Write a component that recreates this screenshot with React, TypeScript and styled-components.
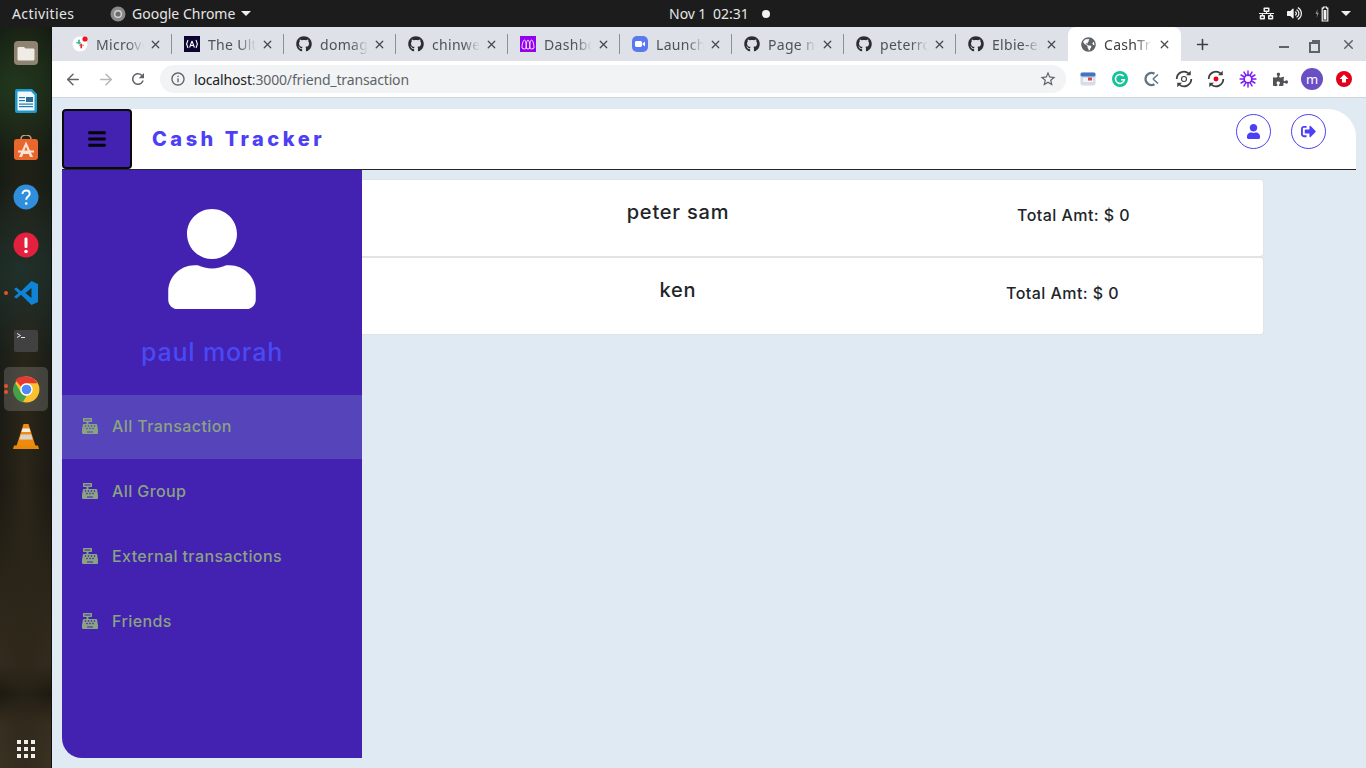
import React from 'react';
import styled, { createGlobalStyle } from 'styled-components';
import { FaBars, FaUser, FaSignOutAlt, FaCashRegister, FaGithub, FaGlobeAmericas, FaPuzzlePiece, FaVolumeUp, FaNetworkWired } from 'react-icons/fa';
import { MdRefresh, MdInfoOutline, MdStarBorder } from 'react-icons/md';
import { ArrowLeft, ArrowRight, X, Plus } from 'lucide-react';

const GlobalStyle = createGlobalStyle`
  html, body {
    margin: 0;
    padding: 0;
    width: 1366px;
    height: 768px;
    overflow: hidden;
    background: #1c1c1c;
  }
  * { box-sizing: border-box; }
`;

const Screen = styled.div`
  width: 1366px;
  height: 768px;
  display: flex;
  flex-direction: column;
  font-family: 'Noto Sans', sans-serif;
`;

/* gnome top bar */
const TopBar = styled.div`
  height: 27px;
  flex: none;
  background: #1c1c1c;
  color: #e6e6e6;
  display: flex;
  align-items: center;
  font-size: 14px;
`;

const Activities = styled.span`
  margin-left: 12px;
  width: 98px;
  letter-spacing: 0.4px;
`;

const AppMenu = styled.div`
  display: flex;
  align-items: center;
  width: 559px;
  gap: 6px;
`;

const Caret = styled.span<{ $tight?: boolean }>`
  width: 0;
  height: 0;
  margin-left: ${p => (p.$tight ? -3 : 0)}px;
  border-left: 5px solid transparent;
  border-right: 5px solid transparent;
  border-top: 5px solid #eee;
`;

const Clock = styled.span`
  width: 93px;
  word-spacing: -0.3px;
  white-space: pre;
`;

const Dot = styled.span`
  width: 8px;
  height: 8px;
  border-radius: 50%;
  background: #f2f2f2;
`;

const Tray = styled.div`
  margin-left: auto;
  padding-right: 15px;
  display: flex;
  align-items: center;
  gap: 13px;
`;

const Body = styled.div`
  flex: 1;
  display: flex;
  min-height: 0;
`;

/* launcher */
const Dock = styled.div`
  width: 52px;
  flex: none;
  padding: 2px 0 0 4px;
  display: flex;
  flex-direction: column;
  border-right: 1px solid #111;
  background:
    radial-gradient(circle at 30% 8%, #22381d 0, transparent 70px),
    radial-gradient(circle at 40% 33%, #20302a 0, transparent 90px),
    radial-gradient(ellipse at 50% 60%, #2c2619 0, transparent 40px),
    linear-gradient(180deg, #0f1a10 0%, #101817 45%, #14130f 62%, #2b2519 76%, #352d20 86%, #17140e 90%, #3a3122 94%, #3f3626 100%);
`;

const DockItem = styled.div<{ $active?: boolean }>`
  position: relative;
  width: 44px;
  height: 48px;
  display: flex;
  align-items: center;
  justify-content: center;
  ${p => p.$active && `
    height: 44px;
    margin: 2px 0;
    border-radius: 5px;
    background: rgba(255, 255, 255, 0.16);
  `}
`;

const DockGrid = styled.div`
  margin-top: auto;
  margin-bottom: 10px;
  margin-left: 13px;
  display: grid;
  grid-template-columns: repeat(3, 4px);
  gap: 3px;
  span {
    width: 4px;
    height: 4px;
    background: #eee;
  }
`;

const RunDot = styled.i<{ $top: number }>`
  position: absolute;
  left: 0;
  top: ${p => p.$top}px;
  width: 4px;
  height: 4px;
  border-radius: 50%;
  background: #e95420;
`;

/* chrome */
const Browser = styled.div`
  flex: 1;
  display: flex;
  flex-direction: column;
  min-width: 0;
`;

const TabStrip = styled.div`
  height: 34px;
  flex: none;
  background: #dee1e8;
  padding-left: 8px;
  display: flex;
  align-items: flex-end;
  color: #5c5f66;
`;

const Tab = styled.div<{ $active?: boolean; $last?: boolean }>`
  width: ${p => (p.$active ? 113 : 112)}px;
  height: 34px;
  padding: 0 10px 0 12px;
  display: flex;
  align-items: center;
  position: relative;
  font-size: 14px;
  color: ${p => (p.$active ? '#3c4043' : '#4f5257')};
  background: ${p => (p.$active ? '#ffffff' : 'transparent')};
  border-radius: ${p => (p.$active ? '8px 8px 0 0' : '0')};
  &::after {
    content: '';
    display: ${p => (p.$active || p.$last ? 'none' : 'block')};
    position: absolute;
    right: 0;
    top: 7px;
    bottom: 7px;
    width: 1px;
    background: #8e9196;
  }
`;

const TabIcon = styled.span`
  width: 16px;
  height: 16px;
  flex: none;
  display: flex;
  align-items: center;
  justify-content: center;
  margin-right: 8px;
`;

const TabTitle = styled.span`
  width: 50px;
  flex: none;
  overflow: hidden;
  white-space: nowrap;
  letter-spacing: 0.3px;
  -webkit-mask-image: linear-gradient(90deg, #000 62%, transparent 96%);
  mask-image: linear-gradient(90deg, #000 62%, transparent 96%);
`;

const TabClose = styled.span`
  margin-left: auto;
  display: flex;
  color: #45484d;
`;

const NewTab = styled.span`
  margin-left: 13px;
  height: 34px;
  display: flex;
  align-items: center;
  color: #3c4043;
`;

const WindowButtons = styled.div`
  margin-left: auto;
  height: 34px;
  padding-right: 10px;
  display: flex;
  align-items: center;
  color: #5f6368;
`;

const MinimizeIcon = styled.span`
  width: 10px;
  height: 2px;
  margin: 6px 23px 0 0;
  background: #5f6368;
`;

const RestoreIcon = styled.span`
  width: 8px;
  height: 8px;
  margin: 0 21px 0 0;
  position: relative;
  border: 2px solid #5f6368;
  &::before {
    content: '';
    position: absolute;
    left: -5px;
    top: 0;
    width: 7px;
    height: 7px;
    border: 2px solid #5f6368;
    background: #dee1e8;
  }
`;

const Toolbar = styled.div`
  height: 37px;
  flex: none;
  background: #ffffff;
  border-bottom: 1px solid #d2d6dc;
  padding-left: 12px;
  display: flex;
  align-items: center;
`;

const NavButton = styled.span<{ $dim?: boolean }>`
  width: 18px;
  margin-right: 14.5px;
  display: flex;
  justify-content: center;
  color: ${p => (p.$dim ? '#b4b6b9' : '#5f6368')};
`;

const AddressBar = styled.div`
  width: 906px;
  height: 28px;
  margin-left: -1.5px;
  padding: 0 9px 0 10px;
  border-radius: 14px;
  background: #f1f3f4;
  display: flex;
  align-items: center;
  font-size: 14px;
  color: #5f6368;
`;

const Host = styled.span`
  color: #202124;
`;

const UrlText = styled.span`
  margin-left: 8px;
  letter-spacing: -0.15px;
`;

const StarSlot = styled.span`
  margin-left: auto;
  display: flex;
  color: #5f6368;
`;

const Extensions = styled.div`
  margin-left: 6px;
  display: flex;
  align-items: center;
`;

const Extension = styled.span`
  width: 32px;
  height: 24px;
  display: flex;
  align-items: center;
  justify-content: center;
`;

const ProfileBadge = styled.span`
  width: 22px;
  height: 22px;
  border-radius: 50%;
  background: #6a4fc4;
  color: #fff;
  font-size: 13px;
  display: flex;
  align-items: center;
  justify-content: center;
`;

/* the app */
const Page = styled.div`
  flex: 1;
  min-height: 0;
  background: #e0eaf3;
  padding: 11px 10px 10px;
  display: flex;
  flex-direction: column;
  font-family: Inter, 'Open Sans', sans-serif;
`;

const Header = styled.header`
  height: 61px;
  flex: none;
  background: #ffffff;
  border-top-right-radius: 28px;
  border-bottom: 1px solid #23262b;
  display: flex;
  align-items: flex-start;
`;

const MenuButton = styled.button`
  width: 70px;
  height: 60px;
  padding: 0;
  border: 2px solid #0a0a0a;
  border-radius: 4px;
  background: #4321b1;
  color: #050505;
  display: flex;
  align-items: center;
  justify-content: center;
`;

const Brand = styled.h1`
  margin: 18px 0 0 20px;
  font-size: 20px;
  line-height: 24px;
  font-weight: 800;
  letter-spacing: 3.5px;
  color: #4d3ff5;
`;

const HeaderActions = styled.div`
  margin: 5px 30px 0 auto;
  display: flex;
  gap: 20px;
`;

const CircleButton = styled.span`
  width: 35px;
  height: 35px;
  border-radius: 50%;
  border: 1px solid #4d3ff5;
  color: #4d3ff5;
  display: flex;
  align-items: center;
  justify-content: center;
`;

const Workspace = styled.div`
  flex: 1;
  min-height: 0;
  display: flex;
`;

const Sidebar = styled.aside`
  width: 300px;
  flex: none;
  background: #4321b1;
  border-bottom-left-radius: 20px;
  padding-top: 39px;
  display: flex;
  flex-direction: column;
`;

const Avatar = styled.div`
  height: 100px;
  display: flex;
  justify-content: center;
  color: #ffffff;
`;

const ProfileName = styled.div`
  margin-top: 25px;
  height: 36px;
  font-size: 25px;
  line-height: 36px;
  font-weight: 500;
  letter-spacing: 0.8px;
  text-align: center;
  color: #4a4af4;
`;

const Nav = styled.nav`
  margin-top: 25px;
  display: flex;
  flex-direction: column;
`;

const NavItem = styled.a<{ $active?: boolean }>`
  height: ${p => (p.$active ? 64 : 65)}px;
  padding: 0 0 2px 20px;
  display: flex;
  align-items: center;
  gap: 14px;
  font-size: 16px;
  font-weight: 500;
  letter-spacing: 0.4px;
  color: #8aa381;
  background: ${p => (p.$active ? '#5644bb' : 'transparent')};
`;

const Content = styled.main`
  width: 902px;
  padding-top: 9px;
  display: flex;
  flex-direction: column;
`;

const FriendCard = styled.div`
  height: 78px;
  flex: none;
  background: #ffffff;
  border: 1px solid #e1e3e5;
  border-left: none;
  border-radius: 0 4px 4px 0;
  display: flex;
  align-items: flex-start;
  color: #212529;
`;

const FriendName = styled.div`
  width: 632px;
  flex: none;
  margin-top: 19px;
  font-size: 20px;
  line-height: 26px;
  font-weight: 500;
  letter-spacing: 0.8px;
  text-align: center;
`;

const FriendTotal = styled.div<{ $indent: number }>`
  margin: 24px 0 0 ${p => p.$indent}px;
  font-size: 16px;
  line-height: 22px;
  font-weight: 500;
  letter-spacing: 0.45px;
`;

const GithubTab = () => <FaGithub size={16} color="#2b2d31" />;

const SlackMark = () => (
  <svg width="16" height="16" viewBox="0 0 16 16">
    <circle cx="8" cy="8" r="7.5" fill="#fff" />
    <rect x="4" y="6" width="5" height="1.6" rx=".8" fill="#36c5f0" />
    <rect x="6.2" y="3.5" width="1.6" height="5" rx=".8" fill="#2eb67d" />
    <rect x="7" y="8.6" width="5" height="1.6" rx=".8" fill="#ecb22e" />
    <rect x="8.4" y="7.5" width="1.6" height="5" rx=".8" fill="#e01e5a" />
    <circle cx="13" cy="3" r="2.6" fill="#f0121e" />
  </svg>
);

const AngularMark = () => (
  <svg width="16" height="16" viewBox="0 0 16 16">
    <rect width="16" height="16" fill="#0c0530" />
    <path d="M8 5 5.600 11.500M8 5l2.400 6.500M6.500 9.500h3M4 4 2.600 8 4 12M12 4l1.400 4L12 12" fill="none" stroke="#fff" strokeWidth="1.100" />
  </svg>
);

const DashboardMark = () => (
  <svg width="16" height="16" viewBox="0 0 16 16">
    <rect width="16" height="16" fill="#9400f0" />
    <path d="M2 12c0-3 1-8 2.400-8s2 5 2 8c-1 1.200-3.400 1.200-4.400 0zM6 12c0-3 .8-8 2-8s2 5 2 8c-1 1.200-3 1.200-4 0zM9.600 12c0-3 .6-8 2-8s2.400 5 2.400 8c-1 1.200-3.400 1.200-4.400 0z" fill="none" stroke="#fff" strokeWidth=".9" />
  </svg>
);

const ZoomMark = () => (
  <svg width="16" height="16" viewBox="0 0 16 16">
    <rect width="16" height="16" rx="5" fill="#5a78f0" />
    <rect x="3" y="5" width="7" height="6" rx="1.400" fill="#fff" />
    <path d="M10.500 7.400 13 5.500v5l-2.500-1.900z" fill="#fff" />
  </svg>
);

const SmallChrome = () => (
  <svg width="16" height="16" viewBox="0 0 16 16">
    <circle cx="8" cy="8" r="7.500" fill="#8a8a8a" />
    <circle cx="8" cy="8" r="4" fill="#d5d5d5" />
    <circle cx="8" cy="8" r="2.600" fill="#6d6d6d" />
  </svg>
);

const NetworkIcon = () => <FaNetworkWired size={15} color="#f2f2f2" />;

const BatteryIcon = () => (
  <svg width="16" height="16" viewBox="0 0 16 16">
    <path d="M2.500 3 .5 8h1.600l-.6 4 2.300-5.200H2.300z" fill="#8e8e8e" />
    <path d="M8.500 1h3v1.200h1.300V15H7.200V2.200h1.300z" fill="none" stroke="#f2f2f2" strokeWidth="1.200" />
    <rect x="8.600" y="4" width="2.800" height="9.600" fill="#f2f2f2" />
  </svg>
);

const FilesIcon = () => (
  <svg width="26" height="26" viewBox="0 0 26 26">
    <rect x="1" y="1" width="24" height="24" rx="4" fill="#8f8471" />
    <path d="M4.500 8.500c0-1 .8-1.500 1.500-1.500h5l1.500 1.500H20c1 0 1.500.7 1.500 1.500v9c0 1-.7 1.500-1.500 1.500H6c-1 0-1.500-.7-1.500-1.500z" fill="#efece6" />
  </svg>
);

const WriterIcon = () => (
  <svg width="24" height="26" viewBox="0 0 24 26">
    <path d="M3 1h15l5 5v17a2 2 0 0 1-2 2H3a2 2 0 0 1-2-2V3a2 2 0 0 1 2-2z" fill="#1c99cf" />
    <path d="M3.500 3.500h13.500l3.500 3.500v15.500h-17z" fill="#f4f8fb" />
    <rect x="5" y="9" width="6" height="1.200" fill="#1a7fb0" />
    <rect x="5" y="12" width="6" height="1.200" fill="#1a7fb0" />
    <rect x="12" y="9" width="7" height="5" fill="#2c6e96" />
    <rect x="5" y="15.500" width="14" height="1.200" fill="#1a7fb0" />
    <rect x="5" y="18" width="14" height="1.200" fill="#1a7fb0" />
  </svg>
);

const StoreIcon = () => (
  <svg width="26" height="28" viewBox="0 2 26 28">
    <path d="M8 7V6a5 4 0 0 1 10 0v1" fill="none" stroke="#c9a27f" strokeWidth="1.500" />
    <rect x="1" y="6" width="24" height="21" rx="3" fill="#e9662c" />
    <path d="M13 8.500 6 24h3l1.200-3h5.600l1.200 3h3zM11 18.500l2-5 2 5z" fill="#fbe3d3" />
    <rect x="5" y="17.500" width="16" height="2" fill="#fbe3d3" />
  </svg>
);

const HelpIcon = () => (
  <svg width="26" height="26" viewBox="0 0 26 26">
    <circle cx="13" cy="13" r="12.500" fill="#2f8fdc" />
    <path d="M9.500 10c0-2 1.500-3.500 3.700-3.500s3.500 1.500 3.500 3.200c0 3-3.500 2.800-3.500 6" fill="none" stroke="#fff" strokeWidth="1.900" />
    <circle cx="13.200" cy="19.500" r="1.300" fill="#fff" />
  </svg>
);

const AlertIcon = () => (
  <svg width="26" height="26" viewBox="0 0 26 26">
    <circle cx="13" cy="13" r="12.500" fill="#e4203f" />
    <rect x="11.500" y="5.500" width="3" height="10.500" rx="1.300" fill="#fff" />
    <circle cx="13" cy="19.500" r="1.800" fill="#fff" />
  </svg>
);

const CodeIcon = () => (
  <svg width="26" height="26" viewBox="0 0 26 26">
    <path d="M18.500 1 25 4v18l-6.500 3L8 14.800 3.500 18.500 1 17l4.500-4L1 9l2.500-1.500L8 11.200zM18.500 8l-6 5 6 5z" fill="#0f84d6" fillRule="evenodd" />
  </svg>
);

const TerminalIcon = () => (
  <svg width="24" height="22" viewBox="0 0 24 22">
    <rect width="24" height="22" rx="2" fill="#414141" />
    <path d="M3 3.500 6.500 5.500 3 7.500" fill="none" stroke="#e8e8e8" strokeWidth="1" />
    <rect x="7" y="7" width="4" height="1" fill="#e8e8e8" />
  </svg>
);

const ChromeIcon = () => (
  <svg width="27" height="27" viewBox="0 0 48 48">
    <circle cx="24" cy="24" r="23" fill="#fbc02d" />
    <path d="M24 1a23 23 0 0 1 20 11.500H24a11.500 11.500 0 0 0-10 5.800L4 6.500A23 23 0 0 1 24 1z" fill="#e53935" transform="translate(0 .5)" />
    <path d="M4 12 14 29.500a11.500 11.500 0 0 0 10 6L17 47A23 23 0 0 1 4 12z" fill="#43a047" />
    <circle cx="24" cy="24" r="11" fill="#fff" />
    <circle cx="24" cy="24" r="8.500" fill="#4c8bf5" />
  </svg>
);

const ConeIcon = () => (
  <svg width="26" height="28" viewBox="0 0 26 28">
    <path d="M10.500 1h5l7 22H3.500z" fill="#f28a0e" />
    <path d="M9.500 5.500h7l1 3.500h-9z" fill="#f3efe8" />
    <path d="M7.800 11.500h10.400l1.500 5H6.300z" fill="#d8d3cb" />
    <path d="M1 22.500h24l1 3.500H0z" fill="#e48a0c" />
  </svg>
);

const CalendarExt = () => (
  <svg width="16" height="16" viewBox="0 0 16 16">
    <rect x=".5" y="1.500" width="15" height="13" rx="2" fill="#d6dde8" />
    <rect x=".5" y="1.500" width="15" height="4" rx="1.500" fill="#3f74c8" />
    <rect x="3" y="7" width="10" height="4" fill="#f5f5f5" />
    <rect x="8" y="6.500" width="4" height="3" fill="#d24a4a" />
  </svg>
);

const GrammarlyExt = () => (
  <svg width="16" height="16" viewBox="0 0 16 16">
    <circle cx="8" cy="8" r="8" fill="#15c39a" />
    <path d="M11.600 5.200A4.500 4.500 0 1 0 12.400 8.800H9" fill="none" stroke="#fff" strokeWidth="1.500" />
  </svg>
);

const ClockifyExt = () => (
  <svg width="16" height="16" viewBox="0 0 16 16">
    <path d="M10.500 2.800a6 6 0 1 0 0 10.400" fill="none" stroke="#5f7687" strokeWidth="2.200" />
    <path d="M9 8 14 3.500M9 8l5 4.500" stroke="#5f7687" strokeWidth="1.600" />
  </svg>
);

const SyncExt = ({ dot }: { dot: string }) => (
  <svg width="18" height="18" viewBox="0 0 16 16">
    <path d="M1.500 8a6.500 6.500 0 0 1 10.600-5M14.500 8a6.500 6.500 0 0 1-10.600 5" fill="none" stroke="#3f3f3f" strokeWidth="1.600" />
    <path d="M9.800 4.600h4.200V.6zM6.200 11.400H2v4z" fill="#3f3f3f" />
    <circle cx="8" cy="8" r="2.200" fill={dot} stroke={dot === '#e8000d' ? 'none' : '#3f3f3f'} strokeWidth="1" />
  </svg>
);

const BurstExt = () => (
  <svg width="18" height="18" viewBox="0 0 16 16">
    {[0, 30, 60, 90, 120, 150].map(angle => (
      <rect key={angle} x="7.350" y=".3" width="1.300" height="15.400" rx=".6" fill="#7a1cf5" transform={`rotate(${angle} 8 8)`} />
    ))}
    <circle cx="8" cy="8" r="4.200" fill="#7a1cf5" />
    <circle cx="8" cy="8" r="2.700" fill="#fff" />
  </svg>
);

const UploadExt = () => (
  <svg width="16" height="16" viewBox="0 0 16 16">
    <circle cx="8" cy="8" r="8" fill="#e2001a" />
    <path d="M8 3.500 12.500 8H10v3.500H6V8H3.500z" fill="#fff" />
  </svg>
);

const tabs = [
  { title: 'Microverse', icon: <SlackMark /> },
  { title: 'The Ultimate', icon: <AngularMark /> },
  { title: 'domagoj', icon: <GithubTab /> },
  { title: 'chinwe', icon: <GithubTab /> },
  { title: 'Dashboard', icon: <DashboardMark /> },
  { title: 'Launch Meeting', icon: <ZoomMark /> },
  { title: 'Page not found', icon: <GithubTab /> },
  { title: 'peterrock', icon: <GithubTab /> },
  { title: 'Elbie-em', icon: <GithubTab /> },
];

const navLinks = ['All Transaction', 'All Group', 'External transactions', 'Friends'];

const friends = [
  { name: 'peter sam', indent: 23 },
  { name: 'ken', indent: 12 },
];

const App: React.FC = () => {
  return (
    <Screen>
      <GlobalStyle />
      <TopBar>
        <Activities>Activities</Activities>
        <AppMenu>
          <SmallChrome />
          Google Chrome
          <Caret />
        </AppMenu>
        <Clock>Nov 1  02:31</Clock>
        <Dot />
        <Tray>
          <NetworkIcon />
          <FaVolumeUp size={15} color="#f2f2f2" />
          <BatteryIcon />
          <Caret $tight />
        </Tray>
      </TopBar>
      <Body>
        <Dock>
          <DockItem><FilesIcon /></DockItem>
          <DockItem><WriterIcon /></DockItem>
          <DockItem><StoreIcon /></DockItem>
          <DockItem><HelpIcon /></DockItem>
          <DockItem><AlertIcon /></DockItem>
          <DockItem><RunDot $top={22} /><CodeIcon /></DockItem>
          <DockItem><TerminalIcon /></DockItem>
          <DockItem $active><RunDot $top={17} /><RunDot $top={23} /><ChromeIcon /></DockItem>
          <DockItem><ConeIcon /></DockItem>
          <DockGrid>
            {Array.from({ length: 9 }).map((_, i) => <span key={i} />)}
          </DockGrid>
        </Dock>
        <Browser>
          <TabStrip>
            {tabs.map((tab, index) => (
              <Tab key={index} $last={index === tabs.length - 1}>
                <TabIcon>{tab.icon}</TabIcon>
                <TabTitle>{tab.title}</TabTitle>
                <TabClose><X size={13} strokeWidth={2.4} /></TabClose>
              </Tab>
            ))}
            <Tab $active>
              <TabIcon><FaGlobeAmericas size={15} color="#5f6368" /></TabIcon>
              <TabTitle>CashTracker</TabTitle>
              <TabClose><X size={13} strokeWidth={2.4} /></TabClose>
            </Tab>
            <NewTab><Plus size={17} strokeWidth={2.2} /></NewTab>
            <WindowButtons>
              <MinimizeIcon />
              <RestoreIcon />
              <X size={15} strokeWidth={2.4} />
            </WindowButtons>
          </TabStrip>
          <Toolbar>
            <NavButton><ArrowLeft size={19} strokeWidth={2} /></NavButton>
            <NavButton $dim><ArrowRight size={19} strokeWidth={2} /></NavButton>
            <NavButton><MdRefresh size={24} /></NavButton>
            <AddressBar>
              <MdInfoOutline size={16} />
              <UrlText><Host>localhost</Host>:3000/friend_transaction</UrlText>
              <StarSlot><MdStarBorder size={18} /></StarSlot>
            </AddressBar>
            <Extensions>
              <Extension><CalendarExt /></Extension>
              <Extension><GrammarlyExt /></Extension>
              <Extension><ClockifyExt /></Extension>
              <Extension><SyncExt dot="#ffffff" /></Extension>
              <Extension><SyncExt dot="#e8000d" /></Extension>
              <Extension><BurstExt /></Extension>
              <Extension><FaPuzzlePiece size={15} color="#4f5257" /></Extension>
              <Extension><ProfileBadge>m</ProfileBadge></Extension>
              <Extension><UploadExt /></Extension>
            </Extensions>
          </Toolbar>
          <Page>
            <Header>
              <MenuButton aria-label="menu"><FaBars size={20} /></MenuButton>
              <Brand>Cash Tracker</Brand>
              <HeaderActions>
                <CircleButton><FaUser size={15} /></CircleButton>
                <CircleButton><FaSignOutAlt size={15} /></CircleButton>
              </HeaderActions>
            </Header>
            <Workspace>
              <Sidebar>
                <Avatar><FaUser size={100} /></Avatar>
                <ProfileName>paul morah</ProfileName>
                <Nav>
                  {navLinks.map((link, index) => (
                    <NavItem key={link} $active={index === 0}>
                      <FaCashRegister size={16} />
                      {link}
                    </NavItem>
                  ))}
                </Nav>
              </Sidebar>
              <Content>
                {friends.map(friend => (
                  <FriendCard key={friend.name}>
                    <FriendName>{friend.name}</FriendName>
                    <FriendTotal $indent={friend.indent}>Total Amt: $ 0</FriendTotal>
                  </FriendCard>
                ))}
              </Content>
            </Workspace>
          </Page>
        </Browser>
      </Body>
    </Screen>
  );
};

export default App;
